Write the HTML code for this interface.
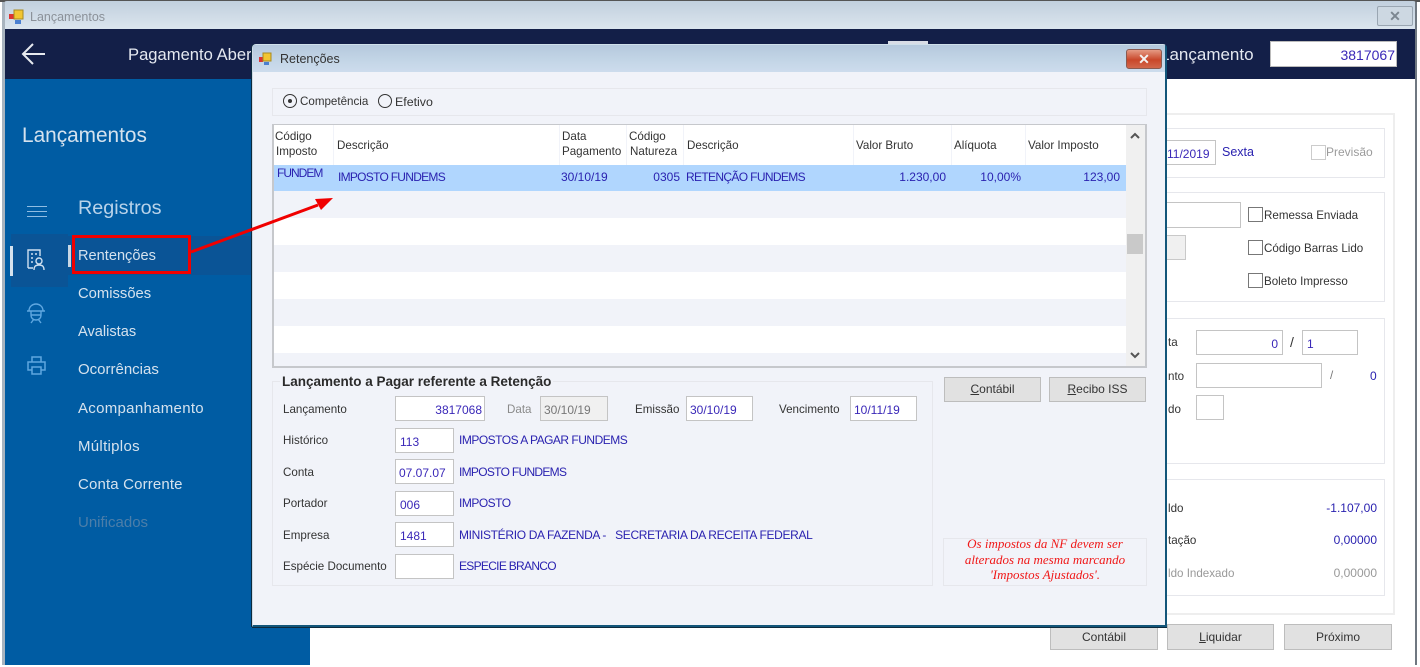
<!DOCTYPE html>
<html lang="pt"><head><meta charset="utf-8"><title>Lançamentos</title>
<style>
html,body{margin:0;padding:0;width:1420px;height:667px;overflow:hidden;background:#fff}
#r{position:relative;width:1420px;height:667px;overflow:hidden;font-family:"Liberation Sans",sans-serif;font-size:11.6px;color:#333;filter:blur(.35px)}
#r div,#r span.t{position:absolute;box-sizing:border-box;white-space:nowrap}
.t{line-height:16px;height:16px}
.l{margin-top:1px}
.b{color:#2a22b0;font-size:12px;letter-spacing:-.5px}
.n{font-size:12px;letter-spacing:0}
.s{color:#d5e2ee;font-size:15px;left:78px;line-height:20px;height:20px}
.i{background:#fff;border:1px solid #c4c4c4;color:#3a28b8;height:25px;line-height:27px;padding:0 4px;font-size:12px}
.rt{text-align:right}
.btn{background:#e1e1e1;border:1px solid #bdbdbd;height:26px;line-height:24px;text-align:center;color:#333;font-size:12px}
.g{border:1px solid #e6e7ec}
.cb{width:15px;height:15px;background:#fff;border:1px solid #777}
.sep{width:1px;background:#f1f3f9;top:125px;height:40px}
u{text-underline-offset:1px}
</style></head><body><div id="r">
<!-- main window -->
<div style="left:0;top:0;width:1420px;height:2px;background:#555"></div>
<div style="left:3px;top:1px;width:1414px;height:28px;background:linear-gradient(#c2d0de,#dbe5ee);border-radius:4px 4px 0 0"></div>
<div style="left:2px;top:2px;width:3px;height:663px;background:#a9b4bf"></div>
<div style="left:1415px;top:2px;width:2px;height:663px;background:#6f7780"></div>
<svg style="position:absolute;left:8px;top:9px" width="17" height="16"><rect x="1" y="5" width="5" height="5" fill="#d33"/><rect x="6" y="1" width="9" height="9" fill="#f2c531" stroke="#a88a20"/><rect x="7" y="11" width="6" height="4" fill="#4a7fd0"/></svg>
<span class="t" style="left:30px;top:9px;color:#8b9199;font-size:12.5px">Lançamentos</span>
<div style="left:1377px;top:6px;width:36px;height:20px;border:1px solid #9aa6b2;border-radius:2px;background:#cdd8e2;color:#7c8791;text-align:center;line-height:18px;font-weight:bold;font-size:14px">✕</div>
<div style="left:5px;top:29px;width:1410px;height:50px;background:#131f48"></div>
<svg style="position:absolute;left:21px;top:42px" width="26" height="26" fill="none" stroke="#e6e9ef" stroke-width="2"><path d="M2 12H24M12 2L2 12L12 22"/></svg>
<span class="t" style="left:128px;top:44px;height:22px;line-height:22px;color:#e4e8f0;font-size:16.6px">Pagamento Aberto</span>
<div style="left:888px;top:41px;width:40px;height:3px;background:#d8dde6"></div>
<span class="t" style="left:1160px;top:44px;height:22px;line-height:22px;color:#e4e8f0;font-size:17px">Lançamento</span>
<div class="rt" style="left:1270px;top:41px;width:127px;height:26px;background:#fff;border:1px solid #bbb;color:#3a28b8;line-height:26px;padding-right:1px;font-size:14px">3817067</div>
<!-- sidebar -->
<div style="left:5px;top:79px;width:305px;height:586px;background:#005ca3"></div>
<span class="t" style="left:22px;top:123px;height:26px;line-height:26px;color:#d5e2ee;font-size:20.8px">Lançamentos</span>
<span class="t s" style="top:196px;height:24px;line-height:24px;font-size:19.8px;color:#b9d3ea">Registros</span>
<div style="left:27px;top:206px;width:20px;height:1px;background:#8fbde3;box-shadow:0 5px 0 #8fbde3,0 10px 0 #8fbde3"></div>
<div style="left:11px;top:234px;width:57px;height:53px;background:#0a5496"></div>
<div style="left:68px;top:236px;width:184px;height:39px;background:#0a5496"></div>
<div style="left:10px;top:246px;width:3px;height:30px;background:#d5e2ee"></div>
<div style="left:68px;top:245px;width:3px;height:22px;background:#c7d6e4"></div>
<svg style="position:absolute;left:26px;top:248px" width="22" height="24" fill="none" stroke="#cfe0f0" stroke-width="1.4"><path d="M2 20V2H14V8M2 20H7"/><path d="M5 6h2M9 6h2M5 10h2M5 14h2" stroke-dasharray="2 1"/><circle cx="13" cy="13" r="3"/><path d="M8 22C8 18 10 17 13 17S18 18 18 22"/></svg>
<svg style="position:absolute;left:26px;top:302px" width="22" height="24" fill="none" stroke="#5fa7e0" stroke-width="1.4"><path d="M3 9C3 4 7 2 10 2S17 4 17 9H3ZM5 9V13C5 16 7 18 10 18S15 16 15 13V9M1 9H19M5 21L8 17M15 21L12 17M5 13H15"/></svg>
<svg style="position:absolute;left:26px;top:355px" width="22" height="22" fill="none" stroke="#5fa7e0" stroke-width="1.5"><path d="M6 7V2H15V7M6 15H2V7H19V15H15M6 12H15V19H6Z"/></svg>
<span class="t s" style="top:246px;font-size:14.6px">Rentenções</span>
<span class="t s" style="top:284px;font-size:14.8px">Comissões</span>
<span class="t s" style="top:322px;font-size:14.6px">Avalistas</span>
<span class="t s" style="top:360px">Ocorrências</span>
<span class="t s" style="top:399px;letter-spacing:.3px">Acompanhamento</span>
<span class="t s" style="top:437px;letter-spacing:.3px">Múltiplos</span>
<span class="t s" style="top:475px;letter-spacing:.15px">Conta Corrente</span>
<span class="t s" style="top:513px;color:#4c7ea9">Unificados</span>
<!-- right panel behind dialog -->
<div style="left:1160px;top:113px;width:235px;height:502px;border:2px solid #eee;border-left:0"></div>
<div class="g" style="left:1160px;top:128px;width:225px;height:50px"></div>
<div class="g" style="left:1160px;top:192px;width:225px;height:110px"></div>
<div class="g" style="left:1160px;top:318px;width:225px;height:146px"></div>
<div class="g" style="left:1160px;top:479px;width:225px;height:117px"></div>
<div style="left:1160px;top:140px;width:56px;height:25px;background:#fff;border:1px solid #c4c4c4;border-left:0;color:#3a28b8;line-height:27px;padding-left:7px;font-size:12px">11/2019</div>
<span class="t b" style="left:1222px;top:144px;font-size:12.5px;letter-spacing:0">Sexta</span>
<div class="cb" style="left:1311px;top:145px;border-color:#ccc"></div>
<span class="t" style="left:1326px;top:144px;color:#9b9b9b;font-size:12px">Previsão</span>
<div style="left:1160px;top:202px;width:81px;height:26px;background:#fff;border:1px solid #c4c4c4;border-left:0"></div>
<div style="left:1160px;top:235px;width:26px;height:25px;background:#f0f0f0;border:1px solid #c9c9c9;border-left:0"></div>
<div class="cb" style="left:1248px;top:207px"></div><span class="t l" style="left:1264px;top:207px">Remessa Enviada</span>
<div class="cb" style="left:1248px;top:240px"></div><span class="t l" style="left:1264px;top:240px">Código Barras Lido</span>
<div class="cb" style="left:1248px;top:273px"></div><span class="t l" style="left:1264px;top:273px">Boleto Impresso</span>
<span class="t l" style="left:1168px;top:334px">ta</span>
<div class="i rt" style="left:1196px;top:330px;width:87px">0</div>
<span class="t" style="left:1290px;top:334px;font-size:14px">/</span>
<div class="i" style="left:1302px;top:330px;width:56px">1</div>
<span class="t l" style="left:1168px;top:368px">nto</span>
<div class="i" style="left:1196px;top:363px;width:126px"></div>
<span class="t" style="left:1330px;top:368px;color:#777">/</span>
<span class="t b n" style="left:1370px;top:368px">0</span>
<span class="t l" style="left:1168px;top:401px">do</span>
<div class="i" style="left:1196px;top:395px;width:28px"></div>
<span class="t l" style="left:1168px;top:500px">ldo</span>
<span class="t b n rt" style="left:1280px;top:500px;width:97px">-1.107,00</span>
<span class="t l" style="left:1168px;top:532px">tação</span>
<span class="t b n rt" style="left:1280px;top:532px;width:97px">0,00000</span>
<span class="t l" style="left:1168px;top:565px;color:#999">ldo Indexado</span>
<span class="t n rt" style="left:1280px;top:565px;width:97px;color:#999">0,00000</span>
<div class="btn" style="left:1050px;top:624px;width:108px">Contábil</div>
<div class="btn" style="left:1167px;top:624px;width:107px"><u>L</u>iquidar</div>
<div class="btn" style="left:1284px;top:624px;width:108px">Próximo</div>
<!-- dialog -->
<div style="left:252px;top:44px;width:915px;height:583px;background:#f1f3f9;border:1px solid #13567a;border-width:1px 2px 2px 1px;border-color:#cfe0ea #13567a #13567a #cfdbe6;border-radius:4px 4px 0 0;box-shadow:-1px 0 0 #0d2a3d,0 1px 0 #0d2a3d"></div>
<div style="left:253px;top:45px;width:912px;height:27px;background:linear-gradient(#b5c9dd,#c4d6e7 60%,#cddced)"></div>
<svg style="position:absolute;left:258px;top:52px" width="16" height="15"><rect x="1" y="5" width="4" height="5" fill="#d33"/><rect x="5" y="1" width="8" height="8" fill="#f2c531" stroke="#a88a20"/><rect x="6" y="10" width="5" height="3" fill="#4a7fd0"/></svg>
<span class="t" style="left:280px;top:51px;color:#333;font-size:12.5px">Retenções</span>
<div style="left:1126px;top:49px;width:36px;height:20px;border:1px solid #8a5a50;border-radius:3px;background:linear-gradient(#e59a84,#c9472a 55%,#d2674b);color:#f3f3f3;text-align:center;line-height:18px;font-weight:bold;font-size:14px">✕</div>
<div class="g" style="left:272px;top:88px;width:875px;height:28px;background:#f1f3f9"></div>
<svg style="position:absolute;left:282px;top:93px" width="110" height="16" fill="none" stroke="#333"><circle cx="8" cy="8" r="6.5"/><circle cx="8" cy="8" r="2" fill="#333" stroke="none"/><circle cx="103" cy="8" r="6.5"/></svg>
<span class="t" style="left:300px;top:94px;">Competência</span>
<span class="t" style="left:395px;top:94px;font-size:12.4px">Efetivo</span>
<!-- grid -->
<div style="left:272px;top:124px;width:875px;height:244px;background:#fff;border:2px solid #c6c8cc;border-width:1px 2px 2px 2px"></div>
<div style="left:274px;top:165px;width:852px;height:26px;background:#b0d6fe"></div>
<div style="left:274px;top:191px;width:852px;height:27px;background:#f1f3f9"></div>
<div style="left:274px;top:245px;width:852px;height:27px;background:#f1f3f9"></div>
<div style="left:274px;top:299px;width:852px;height:27px;background:#f1f3f9"></div>
<div style="left:274px;top:353px;width:852px;height:13px;background:#f1f3f9"></div>
<div style="left:1126px;top:125px;width:19px;height:241px;background:#f0f0f0"></div>
<div style="left:1127px;top:234px;width:16px;height:20px;background:#c9c9c9"></div>
<svg style="position:absolute;left:1129px;top:131px" width="12" height="10" fill="none" stroke="#555" stroke-width="2"><path d="M2 7L6 3L10 7"/></svg>
<svg style="position:absolute;left:1129px;top:350px" width="12" height="10" fill="none" stroke="#555" stroke-width="2"><path d="M2 3L6 7L10 3"/></svg>
<div class="sep" style="left:333px"></div><div class="sep" style="left:559px"></div><div class="sep" style="left:626px"></div><div class="sep" style="left:683px"></div><div class="sep" style="left:853px"></div><div class="sep" style="left:951px"></div><div class="sep" style="left:1025px"></div>
<span class="t" style="left:275px;top:129px">Código</span><span class="t" style="left:276px;top:144px">Imposto</span>
<span class="t" style="left:337px;top:138px">Descrição</span>
<span class="t" style="left:562px;top:129px">Data</span><span class="t" style="left:562px;top:144px">Pagamento</span>
<span class="t" style="left:629px;top:129px">Código</span><span class="t" style="left:630px;top:144px">Natureza</span>
<span class="t" style="left:687px;top:138px">Descrição</span>
<span class="t" style="left:856px;top:138px">Valor Bruto</span>
<span class="t" style="left:954px;top:138px">Alíquota</span>
<span class="t" style="left:1028px;top:138px">Valor Imposto</span>
<span class="t b" style="left:277px;top:165px;letter-spacing:-1px">FUNDEM</span>
<span class="t b" style="left:338px;top:169px;letter-spacing:-.72px">IMPOSTO FUNDEMS</span>
<span class="t b n" style="left:561px;top:169px">30/10/19</span>
<span class="t b n rt" style="left:630px;top:169px;width:50px">0305</span>
<span class="t b" style="left:686px;top:169px;letter-spacing:-.65px">RETENÇÃO FUNDEMS</span>
<span class="t b n rt" style="left:860px;top:169px;width:86px">1.230,00</span>
<span class="t b n rt" style="left:960px;top:169px;width:61px">10,00%</span>
<span class="t b n rt" style="left:1040px;top:169px;width:80px">123,00</span>
<!-- group -->
<div class="g" style="left:272px;top:381px;width:661px;height:205px"></div>
<span class="t" style="left:280px;top:374px;padding:0 2px;background:#f1f3f9;font-weight:bold;color:#2b2b2b;font-size:13.5px">Lançamento a Pagar referente a Retenção</span>
<span class="t l" style="left:283px;top:401px">Lançamento</span>
<div class="i rt" style="left:395px;top:396px;width:90px;padding-right:2px">3817068</div>
<span class="t l" style="left:507px;top:401px;color:#8a8a8a">Data</span>
<div class="i" style="left:540px;top:396px;width:68px;background:#f0f0f0;color:#777;padding:0 3px">30/10/19</div>
<span class="t l" style="left:635px;top:401px">Emissão</span>
<div class="i" style="left:686px;top:396px;width:67px;padding:0 3px">30/10/19</div>
<span class="t l" style="left:779px;top:401px">Vencimento</span>
<div class="i" style="left:850px;top:396px;width:67px;padding:0 3px">10/11/19</div>
<span class="t l" style="left:283px;top:432px">Histórico</span>
<div class="i" style="left:395px;top:428px;width:59px">113</div>
<span class="t b" style="left:459px;top:432px">IMPOSTOS A PAGAR FUNDEMS</span>
<span class="t l" style="left:283px;top:464px">Conta</span>
<div class="i" style="left:395px;top:459px;width:59px;padding:0 3px">07.07.07</div>
<span class="t b" style="left:459px;top:464px;letter-spacing:-.7px">IMPOSTO FUNDEMS</span>
<span class="t l" style="left:283px;top:495px">Portador</span>
<div class="i" style="left:395px;top:491px;width:59px">006</div>
<span class="t b" style="left:459px;top:495px">IMPOSTO</span>
<span class="t l" style="left:283px;top:527px">Empresa</span>
<div class="i" style="left:395px;top:522px;width:59px">1481</div>
<span class="t b" style="left:459px;top:527px;letter-spacing:-.33px">MINISTÉRIO DA FAZENDA -&nbsp;&nbsp; SECRETARIA DA RECEITA FEDERAL</span>
<span class="t l" style="left:283px;top:558px">Espécie Documento</span>
<div class="i" style="left:395px;top:554px;width:59px"></div>
<span class="t b" style="left:459px;top:558px;letter-spacing:-.7px">ESPECIE BRANCO</span>
<div class="btn" style="left:944px;top:377px;width:97px;height:25px;line-height:23px"><u>C</u>ontábil</div>
<div class="btn" style="left:1049px;top:377px;width:97px;height:25px;line-height:23px"><u>R</u>ecibo ISS</div>
<div class="g" style="left:943px;top:538px;width:204px;height:48px"></div>
<div style="left:943px;top:536px;width:204px;text-align:center;color:#f01818;font:italic 13px/15.7px 'Liberation Serif',serif">Os impostos da NF devem ser<br>alterados na mesma marcando<br>'Impostos Ajustados'.</div>
<!-- annotation -->
<div style="left:72px;top:235px;width:119px;height:39px;border:3px solid #f00000"></div>
<svg style="position:absolute;left:0;top:0" width="1420" height="667"><path d="M191 252L318 205" stroke="#f00000" stroke-width="3"/><path d="M333 198L315 199L321 210Z" fill="#f00000"/></svg>
</div></body></html>
